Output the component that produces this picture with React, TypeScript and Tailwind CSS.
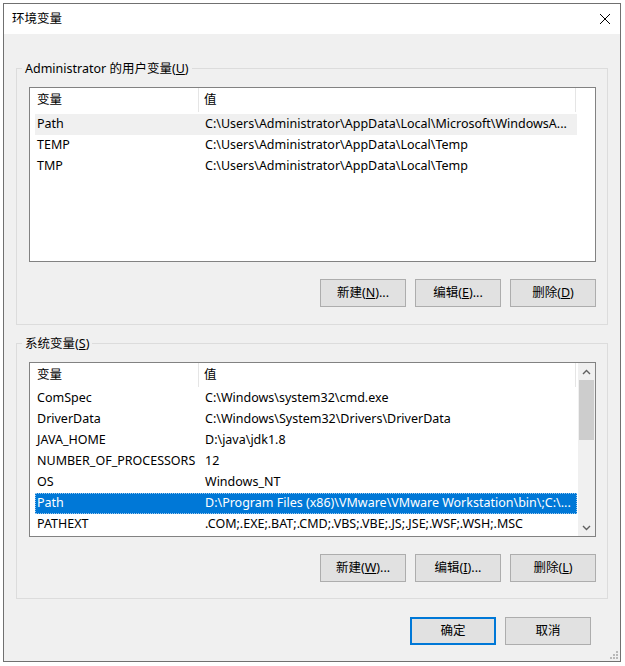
import React from "react";

const FONT = { fontFamily: '"Noto Sans", "Noto Sans CJK SC", sans-serif' };

function Btn({ children, primary = false }: { children: React.ReactNode; primary?: boolean }) {
  return (
    <div
      className={
        "h-[28px] w-[86px] flex items-center justify-center bg-[#e1e1e1] text-[12.5px] text-black " +
        (primary ? "border-2 border-[#0078d7]" : "border border-[#adadad]")
      }
    >
      {children}
    </div>
  );
}

type Row = { name: string; value: string; sel?: "gray" | "blue" };

function Header() {
  return (
    <div className="flex h-[24px] items-center text-[12.5px] text-black bg-white">
      <div className="w-[169px] h-full flex items-center pl-[7px] border-r border-[#e5e5e5]">变量</div>
      <div className="w-[377px] h-full flex items-center pl-[5px] border-r border-[#e5e5e5]">值</div>
    </div>
  );
}

function Rows({ rows, offset }: { rows: Row[]; offset: string }) {
  return (
    <div className={"flex flex-col " + offset}>
      {rows.map((r) => (
        <div
          key={r.name}
          className={
            "ml-[5px] w-[542px] h-[21px] flex items-center text-[12.5px] whitespace-nowrap " +
            (r.sel === "blue"
              ? "bg-[#0078d7] text-white outline-1 outline-dotted outline-[#9cc8ec] -outline-offset-1"
              : r.sel === "gray"
              ? "bg-[#f0f0f0] text-black"
              : "text-black")
          }
        >
          <div className="w-[165px] overflow-hidden pl-[2px]">{r.name}</div>
          <div className="flex-1 pl-[5px] overflow-hidden">{r.value}</div>
        </div>
      ))}
    </div>
  );
}

function Group({
  label,
  mnemonic,
  children,
  buttons,
  pb,
}: {
  label: string;
  mnemonic: string;
  children: React.ReactNode;
  buttons: React.ReactNode;
  pb: string;
}) {
  return (
    <fieldset className={"border border-[#dcdcdc] m-0 " + pb}>
      <legend className="ml-[5px] px-[3px] h-[17px] leading-[17px] text-[12.5px] text-black">
        {label}(<span className="underline">{mnemonic}</span>)
      </legend>
      <div className="pl-[12px] pr-[11px]">
        <div className="mt-[10px] h-[175px] border border-[#828282] bg-white">{children}</div>
        <div className="mt-[17px] flex justify-end gap-[9px]">{buttons}</div>
      </div>
    </fieldset>
  );
}

function Chevron({ up }: { up: boolean }) {
  return (
    <svg width="9" height="6" viewBox="0 0 9 6">
      <path
        d={up ? "M1 5 L4.5 1.5 L8 5" : "M1 1 L4.5 4.5 L8 1"}
        fill="none"
        stroke="#606060"
        strokeWidth="1.4"
      />
    </svg>
  );
}

export default function App() {
  const userRows: Row[] = [
    { name: "Path", value: "C:\\Users\\Administrator\\AppData\\Local\\Microsoft\\WindowsA...", sel: "gray" },
    { name: "TEMP", value: "C:\\Users\\Administrator\\AppData\\Local\\Temp" },
    { name: "TMP", value: "C:\\Users\\Administrator\\AppData\\Local\\Temp" },
  ];
  const sysRows: Row[] = [
    { name: "ComSpec", value: "C:\\Windows\\system32\\cmd.exe" },
    { name: "DriverData", value: "C:\\Windows\\System32\\Drivers\\DriverData" },
    { name: "JAVA_HOME", value: "D:\\java\\jdk1.8" },
    { name: "NUMBER_OF_PROCESSORS", value: "12" },
    { name: "OS", value: "Windows_NT" },
    { name: "Path", value: "D:\\Program Files (x86)\\VMware\\VMware Workstation\\bin\\;C:\\...", sel: "blue" },
    { name: "PATHEXT", value: ".COM;.EXE;.BAT;.CMD;.VBS;.VBE;.JS;.JSE;.WSF;.WSH;.MSC" },
  ];

  return (
    <div className="w-[625px] h-[666px] bg-white pt-[3px] pl-[3px]" style={FONT}>
      <div className="relative w-[618px] h-[659px] border border-[#707070] bg-[#f0f0f0] flex flex-col">
        <div className="h-[30px] bg-white flex items-center justify-between pl-[8px] pr-[10px]">
          <span className="text-[12.5px] text-black">环境变量</span>
          <svg width="10" height="10" viewBox="0 0 10 10">
            <path d="M0 0 L10 10 M10 0 L0 10" stroke="#000" strokeWidth="1" />
          </svg>
        </div>
        <div className="flex-1 flex flex-col pt-[26px] px-[12px]">
          <Group
            label="Administrator 的用户变量"
            mnemonic="U"
            pb="pb-[17px]"
            buttons={
              <>
                <Btn>
                  新建(<span className="underline">N</span>)...
                </Btn>
                <Btn>
                  编辑(<span className="underline">E</span>)...
                </Btn>
                <Btn>
                  删除(<span className="underline">D</span>)
                </Btn>
              </>
            }
          >
            <div className="flex flex-col">
              <Header />
              <Rows rows={userRows} offset="mt-[2px]" />
            </div>
          </Group>
          <div className="h-[10px]" />
          <Group
            label="系统变量"
            mnemonic="S"
            pb="pb-[16px]"
            buttons={
              <>
                <Btn>
                  新建(<span className="underline">W</span>)...
                </Btn>
                <Btn>
                  编辑(<span className="underline">I</span>)...
                </Btn>
                <Btn>
                  删除(<span className="underline">L</span>)
                </Btn>
              </>
            }
          >
            <div className="flex h-full">
              <div className="flex flex-col w-[548px]">
                <Header />
                <Rows rows={sysRows} offset="mt-[1px]" />
              </div>
              <div className="ml-auto w-[17px] h-full bg-[#f0f0f0] flex flex-col">
                <div className="h-[17px] flex items-center justify-center">
                  <Chevron up />
                </div>
                <div className="h-[60px] mx-[1px] bg-[#cdcdcd]" />
                <div className="flex-1" />
                <div className="h-[17px] flex items-center justify-center">
                  <Chevron up={false} />
                </div>
              </div>
            </div>
          </Group>
          <div className="mt-[18px] flex justify-end gap-[9px] pr-[17px]">
            <Btn primary>确定</Btn>
            <Btn>取消</Btn>
          </div>
        </div>
        <svg className="absolute right-[1px] bottom-[1px]" width="10" height="10" viewBox="0 0 10 10">
          <rect x="7" y="1" width="2" height="2" fill="#b8b8b8" />
          <rect x="4" y="4" width="2" height="2" fill="#b8b8b8" />
          <rect x="7" y="4" width="2" height="2" fill="#b8b8b8" />
          <rect x="1" y="7" width="2" height="2" fill="#b8b8b8" />
          <rect x="4" y="7" width="2" height="2" fill="#b8b8b8" />
          <rect x="7" y="7" width="2" height="2" fill="#b8b8b8" />
        </svg>
      </div>
    </div>
  );
}
